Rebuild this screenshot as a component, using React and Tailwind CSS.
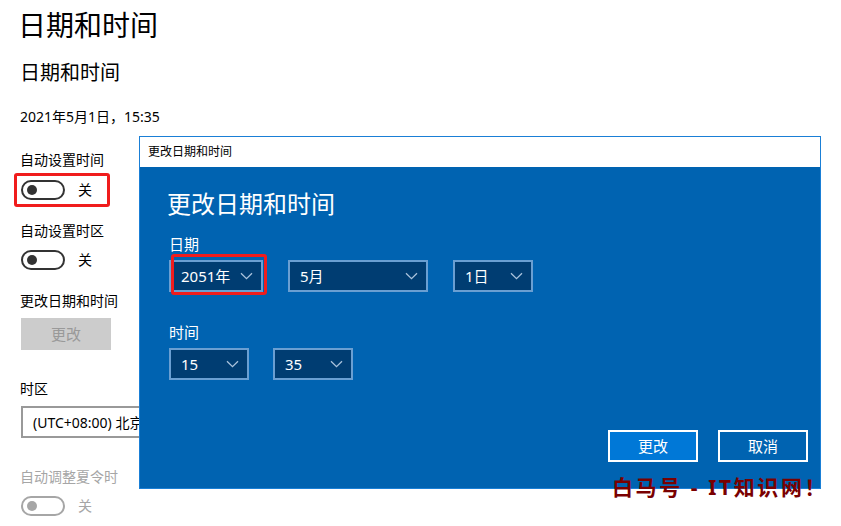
import React from "react";

const Chevron = ({ color = "#a9c2dc" }) => (
  <svg width="13" height="8" viewBox="0 0 13 8" fill="none">
    <path d="M1 1.2 L6.5 6.6 L12 1.2" stroke={color} strokeWidth="1.3" />
  </svg>
);

const Toggle = ({ label = "关", muted = false }) => (
  <div className="flex items-center h-[20px]">
    <div
      className={`w-[44px] h-[20px] rounded-full border-2 flex items-center pl-[4px] ${
        muted ? "border-[#a6a6a6]" : "border-[#333333]"
      }`}
    >
      <div className={`w-[10px] h-[10px] rounded-full ${muted ? "bg-[#a6a6a6]" : "bg-[#333333]"}`} />
    </div>
    <span className={`ml-[13px] text-[14px] leading-[20px] ${muted ? "text-[#a6a6a6]" : "text-black"}`}>
      {label}
    </span>
  </div>
);

const Dropdown = ({ value, width, highlight = false }) => (
  <div className="relative" style={{ width }}>
    <div className="h-[32px] bg-[#003d72] border-2 border-[#6a9fd2] flex items-center justify-between pl-[10px] pr-[8px]">
      <span className="text-white text-[15px] leading-[20px]">{value}</span>
      <Chevron />
    </div>
    {highlight && (
      <div className="absolute left-[2px] -top-[6px] w-[96px] h-[41px] border-[3px] border-[#f01c1c] rounded-[3px]" />
    )}
  </div>
);

const ChangeDialog = () => (
  <div className="absolute left-[139px] top-[136px] w-[682px] h-[353px] border border-[#1a7fd6] flex flex-col">
    <div className="h-[30px] bg-white flex items-center pl-[8px] text-[12px] text-black">
      更改日期和时间
    </div>
    <div className="flex-1 bg-[#0063b1] px-[29px] flex flex-col">
      <div className="pt-[21px] -ml-[2px] text-[24px] leading-[32px] text-white">更改日期和时间</div>
      <div className="mt-[14px] text-[15px] leading-[20px] text-white">日期</div>
      <div className="mt-[6px] flex gap-[25px]">
        <Dropdown value="2051年" width={94} highlight />
        <Dropdown value="5月" width={140} />
        <Dropdown value="1日" width={80} />
      </div>
      <div className="mt-[30px] text-[15px] leading-[20px] text-white">时间</div>
      <div className="mt-[6px] flex gap-[24px]">
        <Dropdown value="15" width={80} />
        <Dropdown value="35" width={80} />
      </div>
      <div className="mt-[50px] flex justify-end gap-[20px] -mr-[17px]">
        <button className="w-[90px] h-[32px] bg-[#0078d7] border-2 border-white text-white text-[15px]">
          更改
        </button>
        <button className="w-[90px] h-[32px] border-2 border-white text-white text-[15px]">
          取消
        </button>
      </div>
    </div>
  </div>
);

export default function App() {
  return (
    <div className="relative w-[841px] h-[526px] bg-white overflow-hidden font-['Noto_Sans','Noto_Sans_CJK_SC',sans-serif] text-black">
      <div className="pl-[20px] pt-[7px] flex flex-col items-start">
        <div className="-ml-[2px] text-[28px] leading-[36px]">日期和时间</div>
        <div className="mt-[16px] text-[20px] leading-[28px]">日期和时间</div>
        <div className="mt-[20px] text-[14px] leading-[20px]">2021年5月1日，15:35</div>

        <div className="mt-[23px] text-[14px] leading-[20px]">自动设置时间</div>
        <div className="mt-[10px] relative pl-[1px]">
          <Toggle />
          <div className="absolute -left-[6px] -top-[7px] w-[96px] h-[34px] border-[3px] border-[#f01c1c] rounded-[3px]" />
        </div>

        <div className="mt-[21px] text-[14px] leading-[20px]">自动设置时区</div>
        <div className="mt-[9px] pl-[1px]">
          <Toggle />
        </div>

        <div className="mt-[21px] text-[14px] leading-[20px]">更改日期和时间</div>
        <button className="mt-[7px] ml-[1px] w-[90px] h-[32px] bg-[#cccccc] text-[#999999] text-[15px]">
          更改
        </button>

        <div className="mt-[29px] text-[14px] leading-[20px]">时区</div>
        <div className="mt-[7px] ml-[1px] w-[360px] h-[32px] border-2 border-[#999999] flex items-center pl-[10px] text-[14px] whitespace-nowrap">
          (UTC+08:00) 北京，重庆，香港特别行政区，乌鲁木齐
        </div>

        <div className="mt-[29px] text-[14px] leading-[20px] text-[#a6a6a6]">自动调整夏令时</div>
        <div className="mt-[9px] pl-[1px]">
          <Toggle muted />
        </div>
      </div>

      <ChangeDialog />

      <div className="absolute left-[612px] top-[474px] text-[21px] leading-[26px] font-bold text-[#7a0000] tracking-[2.6px] whitespace-nowrap">
        白马号 - IT知识网！
      </div>
    </div>
  );
}
